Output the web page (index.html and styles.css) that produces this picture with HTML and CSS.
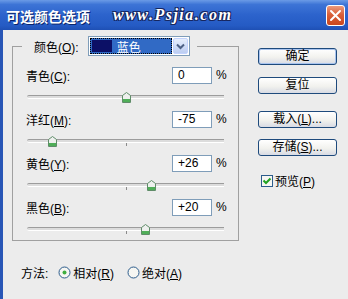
FILE: index.html
```html
<!DOCTYPE html>
<html lang="zh-CN">
<head>
    <meta charset="UTF-8">
    <title>可选颜色选项</title>
    <link rel="stylesheet" href="styles.css">
</head>
<body>
    <div class="window">
        <div class="titlebar">
            <span class="title">可选颜色选项</span>
            <span class="watermark">www.Psjia.com</span>
            <span class="close-btn">
                <svg width="19" height="21" viewBox="0 0 19 21">
                    <path d="M5 6 L14 15 M14 6 L5 15" stroke="#fff" stroke-width="2" stroke-linecap="round"/>
                </svg>
            </span>
        </div>

        <div class="client">
            <div class="left-col">
                <fieldset class="group">
                    <legend class="group-legend">
                        <div class="legend-inner">
                            <span class="legend-label">颜色(<u>O</u>):</span>
                            <span class="dropdown">
                                <span class="dropdown-value">
                                    <span class="swatch"></span>
                                    <span class="dropdown-text">蓝色</span>
                                </span>
                                <span class="dropdown-arrow">
                                    <svg width="13" height="14" viewBox="0 0 13 14">
                                        <path d="M3 5.5 L6.5 9 L10 5.5" stroke="#4d6185" stroke-width="2" fill="none"/>
                                    </svg>
                                </span>
                            </span>
                        </div>
                    </legend>

                    <div class="field-row">
                        <span class="field-label">青色(<u>C</u>):</span>
                        <span class="field-input">0</span>
                        <span class="percent">%</span>
                    </div>
                    <div class="slider">
                        <div class="track"></div>
                        <span class="tick"></span>
                        <span class="thumb" style="left: 50%;">
                            <svg width="9" height="11" viewBox="0 0 9 11"><path d="M0.5 3.5 L4.5 0.5 L8.5 3.5 V10.5 H0.5 Z" fill="#eef0ee" stroke="#5f8c68"/><rect x="1" y="7" width="7" height="3" fill="#4fae58"/></svg>
                        </span>
                    </div>

                    <div class="field-row">
                        <span class="field-label">洋红(<u>M</u>):</span>
                        <span class="field-input">-75</span>
                        <span class="percent">%</span>
                    </div>
                    <div class="slider">
                        <div class="track"></div>
                        <span class="tick"></span>
                        <span class="thumb" style="left: 12.5%;">
                            <svg width="9" height="11" viewBox="0 0 9 11"><path d="M0.5 3.5 L4.5 0.5 L8.5 3.5 V10.5 H0.5 Z" fill="#eef0ee" stroke="#5f8c68"/><rect x="1" y="7" width="7" height="3" fill="#4fae58"/></svg>
                        </span>
                    </div>

                    <div class="field-row">
                        <span class="field-label">黄色(<u>Y</u>):</span>
                        <span class="field-input">+26</span>
                        <span class="percent">%</span>
                    </div>
                    <div class="slider">
                        <div class="track"></div>
                        <span class="tick"></span>
                        <span class="thumb" style="left: 63%;">
                            <svg width="9" height="11" viewBox="0 0 9 11"><path d="M0.5 3.5 L4.5 0.5 L8.5 3.5 V10.5 H0.5 Z" fill="#eef0ee" stroke="#5f8c68"/><rect x="1" y="7" width="7" height="3" fill="#4fae58"/></svg>
                        </span>
                    </div>

                    <div class="field-row">
                        <span class="field-label">黑色(<u>B</u>):</span>
                        <span class="field-input">+20</span>
                        <span class="percent">%</span>
                    </div>
                    <div class="slider">
                        <div class="track"></div>
                        <span class="tick"></span>
                        <span class="thumb" style="left: 60%;">
                            <svg width="9" height="11" viewBox="0 0 9 11"><path d="M0.5 3.5 L4.5 0.5 L8.5 3.5 V10.5 H0.5 Z" fill="#eef0ee" stroke="#5f8c68"/><rect x="1" y="7" width="7" height="3" fill="#4fae58"/></svg>
                        </span>
                    </div>
                </fieldset>

                <div class="method-row">
                    <span class="method-label">方法:</span>
                    <span class="radio">
                        <svg width="13" height="13" viewBox="0 0 13 13"><circle cx="6.5" cy="6.5" r="5.5" fill="#f6f6f2" stroke="#2c5c8c"/><circle cx="6.5" cy="6.5" r="2" fill="#3fae3f"/></svg>
                        <span>相对(<u>R</u>)</span>
                    </span>
                    <span class="radio">
                        <svg width="13" height="13" viewBox="0 0 13 13"><circle cx="6.5" cy="6.5" r="5.5" fill="#f6f6f2" stroke="#2c5c8c"/></svg>
                        <span>绝对(<u>A</u>)</span>
                    </span>
                </div>
            </div>

            <div class="right-col">
                <button class="btn btn-default">确定</button>
                <button class="btn btn-reset">复位</button>
                <button class="btn btn-load">载入(<u>L</u>)...</button>
                <button class="btn btn-save">存储(<u>S</u>)...</button>
                <div class="check-row">
                    <svg width="12" height="12" viewBox="0 0 12 12"><rect x="0.5" y="0.5" width="11" height="11" fill="#f6f6f2" stroke="#2c5c8c"/><path d="M2.5 5.5 L5 8 L9.5 3.5" stroke="#21a121" stroke-width="2" fill="none"/></svg>
                    <span>预览(<u>P</u>)</span>
                </div>
            </div>
        </div>
    </div>
</body>
</html>
```

FILE: styles.css
```css
* {
    box-sizing: border-box;
}
body {
    margin: 0;
    font-family: "Liberation Sans", "Noto Sans CJK SC", sans-serif;
    font-size: 12px;
    color: #000;
    background-color: #ececec;
}
.window {
    width: 348px;
    height: 299px;
    display: flex;
    flex-direction: column;
    overflow: hidden;
}
.titlebar {
    height: 30px;
    flex: none;
    display: flex;
    align-items: center;
    background: linear-gradient(to bottom, #6b9be6 0%, #3d74d6 15%, #2c63cc 50%, #255bc4 85%, #1e50b4 100%);
}
.title {
    margin-left: 6px;
    padding-top: 2px;
    font-family: "Noto Sans CJK SC", sans-serif;
    font-weight: bold;
    font-size: 14px;
    color: #fff;
    text-shadow: 1px 1px 0 #0a246a;
}
.watermark {
    margin-left: 23px;
    font-family: "Liberation Serif", serif;
    font-style: italic;
    font-weight: bold;
    font-size: 16px;
    letter-spacing: 1.5px;
    color: #fff;
    text-shadow: 1px 1px 0 #16265e, -1px -1px 0 #16265e, 1px -1px 0 #16265e, -1px 1px 0 #16265e;
}
.close-btn {
    margin-left: auto;
    margin-right: 3px;
    width: 19px;
    height: 21px;
    display: flex;
    border: 1px solid #fff;
    border-radius: 3px;
    background: linear-gradient(to bottom, #ec9a7c, #d9603a 45%, #c9461f);
}
.close-btn svg {
    margin: -1px;
}
.client {
    flex: 1;
    display: flex;
    border-left: 3px solid #2856b6;
}
.left-col {
    padding: 6px 0 0 9px;
}
.group {
    margin: 0;
    width: 227px;
    min-width: 0;
    padding: 8px 11px 0 13px;
    border: 1px solid #a0a0a0;
}
.group-legend {
    margin-left: -4px;
    padding: 0 7px 0 12px;
}
.legend-inner {
    display: flex;
    align-items: center;
    height: 20px;
}
.legend-label {
    margin-right: 9px;
}
.dropdown {
    width: 102px;
    height: 20px;
    display: flex;
    padding: 1px;
    border: 1px solid #7f9db9;
    background: #fff;
}
.dropdown-value {
    flex: 1;
    display: flex;
    align-items: center;
    margin-right: 1px;
    padding: 1px;
    border: 1px dotted #000;
    background: #316ac5;
    color: #fff;
}
.swatch {
    width: 20px;
    height: 100%;
    background: #0c1066;
}
.dropdown-text {
    margin-left: 5px;
}
.dropdown-arrow {
    width: 15px;
    display: flex;
    align-items: center;
    justify-content: center;
    border: 1px solid #c3d3fd;
    border-radius: 2px;
    background: linear-gradient(to bottom, #e6eefc, #bccdf2);
}
.field-row {
    display: flex;
    align-items: center;
    height: 22px;
}
.field-label {
    flex: 1;
}
.field-input {
    width: 40px;
    height: 17px;
    padding: 0 5px;
    line-height: 15px;
    border: 1px solid #7f9db9;
    background: #fff;
}
.percent {
    margin-left: 4px;
    width: 11px;
}
.slider {
    position: relative;
    height: 22px;
    margin: 0 3px 0 1px;
    display: flex;
    align-items: center;
}
.track {
    width: 100%;
    height: 4px;
    border-top: 1px solid #9c9c9c;
    border-bottom: 1px solid #fff;
    border-radius: 2px 0 0 2px;
    background: #dcdcdc;
}
.tick {
    position: absolute;
    left: 50%;
    top: 13px;
    width: 1px;
    height: 3px;
    background: #8a8a8a;
}
.thumb {
    position: absolute;
    top: 6px;
    margin-left: -4px;
    width: 9px;
    height: 11px;
    display: flex;
}
.method-row {
    display: flex;
    align-items: center;
    height: 14px;
    margin: 24px 0 0 9px;
}
.method-label {
    margin-right: 10px;
}
.radio {
    display: flex;
    align-items: center;
    gap: 2px;
    margin-right: 13px;
}
.right-col {
    display: flex;
    flex-direction: column;
    margin-left: 19px;
    padding-top: 18px;
}
.btn {
    width: 79px;
    height: 17px;
    padding: 0;
    font: inherit;
    line-height: 15px;
    text-align: center;
    color: #000;
    border: 1px solid #1e4a7c;
    border-radius: 3px;
    background: linear-gradient(to bottom, #ffffff, #f2f2ee 55%, #d8dbe4);
}
.btn-default {
    box-shadow: inset 0 0 0 1px #a9c4ef;
}
.btn-reset {
    margin-top: 12px;
}
.btn-load {
    margin-top: 17px;
}
.btn-save {
    margin-top: 11px;
}
.check-row {
    display: flex;
    align-items: center;
    gap: 2px;
    margin: 16px 0 0 3px;
}
```
